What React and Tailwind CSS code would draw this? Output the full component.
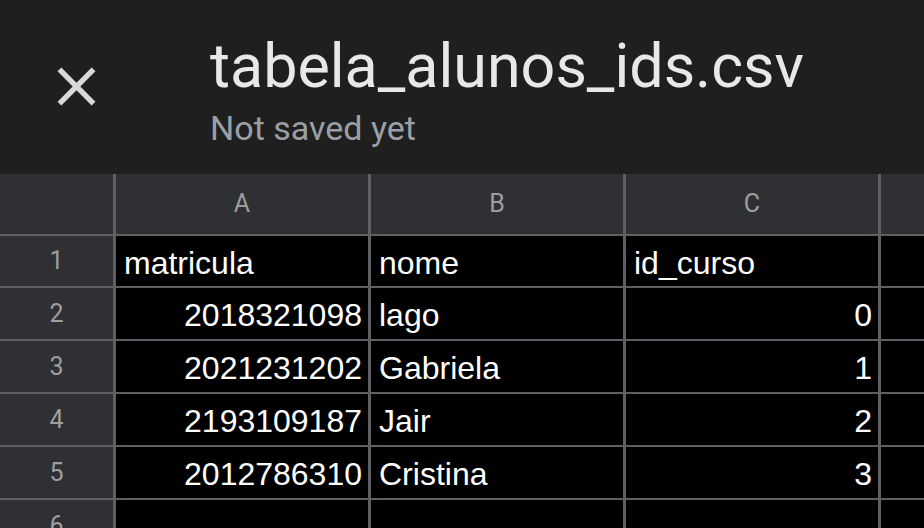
import React from "react";

const rows = [
  { n: 1, h: "h-[52px]", a: "matricula", aRight: false, b: "nome", c: "id_curso", cRight: false },
  { n: 2, h: "h-[53px]", a: "2018321098", aRight: true, b: "lago", c: "0", cRight: true },
  { n: 3, h: "h-[53px]", a: "2021231202", aRight: true, b: "Gabriela", c: "1", cRight: true },
  { n: 4, h: "h-[53px]", a: "2193109187", aRight: true, b: "Jair", c: "2", cRight: true },
  { n: 5, h: "h-[53px]", a: "2012786310", aRight: true, b: "Cristina", c: "3", cRight: true },
  { n: 6, h: "h-[53px]", a: "", aRight: false, b: "", c: "", cRight: false },
];

function Cell({ text, right }) {
  return (
    <div
      className={
        "w-[255px] shrink-0 h-full border-r-[3px] border-[#5f6064] bg-black flex items-center pt-[3px] pl-[8px] pr-[6px] text-[32px] leading-none text-white font-['Liberation_Sans',Arial,sans-serif] " +
        (right ? "justify-end" : "justify-start")
      }
    >
      <span className="whitespace-nowrap">{text}</span>
    </div>
  );
}

export default function App() {
  return (
    <div className="w-[924px] h-[528px] overflow-hidden bg-black flex flex-col">
      {/* Top bar */}
      <div className="h-[174px] shrink-0 bg-[#1f1f1f] flex items-start pl-[44px]">
        <svg
          viewBox="0 0 24 24"
          className="w-[65px] h-[65px] mt-[54px] shrink-0"
          fill="#d9d9d9"
        >
          <path d="M19 6.41L17.59 5 12 10.59 6.41 5 5 6.41 10.59 12 5 17.59 6.41 19 12 13.41 17.59 19 19 17.59 13.41 12z" />
        </svg>
        <div className="ml-[101px] pt-[36px] flex flex-col font-['Roboto',sans-serif]">
          <div className="text-[61px] leading-[60px] text-[#e8e8e8] whitespace-nowrap">
            tabela_alunos_ids.csv
          </div>
          <div className="mt-[15px] text-[34px] leading-[34px] text-[#9aa0a6] whitespace-nowrap">
            Not saved yet
          </div>
        </div>
      </div>

      {/* Column header row */}
      <div className="h-[62px] shrink-0 flex border-b-2 border-[#5f6064] bg-[#2f3033] font-['Roboto',sans-serif] text-[25px] text-[#9e9e9e]">
        <div className="w-[116px] shrink-0 h-full border-r-[3px] border-[#5f6064]" />
        {["A", "B", "C"].map((l) => (
          <div
            key={l}
            className="w-[255px] shrink-0 h-full border-r-[3px] border-[#5f6064] flex items-center justify-center"
          >
            {l}
          </div>
        ))}
        <div className="flex-1 h-full" />
      </div>

      {/* Data rows */}
      {rows.map((r) => (
        <div
          key={r.n}
          className={r.h + " shrink-0 flex border-b-2 border-[#5f6064]"}
        >
          <div className="w-[116px] shrink-0 h-full border-r-[3px] border-[#5f6064] bg-[#2f3033] flex items-center justify-center font-['Roboto',sans-serif] text-[25px] text-[#9e9e9e]">
            {r.n}
          </div>
          <Cell text={r.a} right={r.aRight} />
          <Cell text={r.b} right={false} />
          <Cell text={r.c} right={r.cRight} />
          <div className="flex-1 h-full bg-black" />
        </div>
      ))}
    </div>
  );
}
